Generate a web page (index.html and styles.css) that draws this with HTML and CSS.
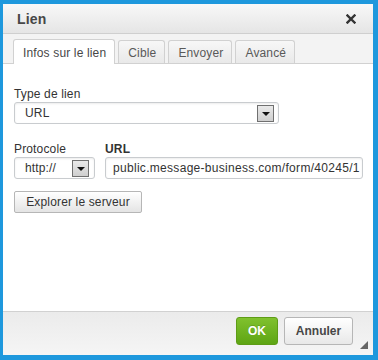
FILE: index.html
```html
<!DOCTYPE html>
<html lang="fr">
<head>
<meta charset="utf-8">
<title>Lien</title>
<link rel="stylesheet" href="styles.css">
</head>
<body>
<div class="frame">
  <div class="dialog">
    <div class="titlebar">
      <span class="title">Lien</span>
      <svg class="close" width="10" height="10" viewBox="0 0 10 10"><path d="M1.5 1.5 L8.5 8.5 M8.5 1.5 L1.5 8.5" stroke="#333" stroke-width="2.4" stroke-linecap="square"/></svg>
    </div>
    <div class="tabs">
      <div class="tab active">Infos sur le lien</div>
      <div class="tab">Cible</div>
      <div class="tab">Envoyer</div>
      <div class="tab">Avancé</div>
    </div>
    <div class="content">
      <div class="field">
        <label class="label">Type de lien</label>
        <div class="select select-type">
          <span class="value">URL</span>
          <span class="arrow"></span>
        </div>
      </div>
      <div class="row">
        <div class="field">
          <label class="label">Protocole</label>
          <div class="select select-proto">
            <span class="value">http://</span>
            <span class="arrow"></span>
          </div>
        </div>
        <div class="field grow">
          <label class="label bold">URL</label>
          <div class="input">public.message-business.com/form/40245/1</div>
        </div>
      </div>
      <div class="btn-row">
        <button class="btn">Explorer le serveur</button>
      </div>
    </div>
    <div class="footer">
      <button class="dbtn ok">OK</button>
      <button class="dbtn cancel">Annuler</button>
      <span class="grip"></span>
    </div>
  </div>
</div>
</body>
</html>
```

FILE: styles.css
```css
html, body {
  margin: 0;
  padding: 0;
}
body {
  background: #1e98dd;
  font-family: "Liberation Sans", Arial, sans-serif;
  font-size: 12px;
  color: #333;
  letter-spacing: 0.15px;
}
.frame {
  width: 378px;
  height: 360px;
  box-sizing: border-box;
  padding: 4px 5px 5px 3px;
}
.dialog {
  width: 370px;
  height: 351px;
  background: #fff;
  display: flex;
  flex-direction: column;
}
.titlebar {
  height: 29px;
  flex: none;
  border-bottom: 1px solid #cfcfcf;
  background: linear-gradient(#f8f8f8, #e5e5e5);
  display: flex;
  align-items: center;
  justify-content: space-between;
  padding: 0 17px 0 14px;
}
.title {
  font-weight: bold;
  font-size: 14px;
  color: #474747;
  margin-top: 1px;
}
.close {
  display: block;
  margin-top: 1px;
}
.tabs {
  height: 29px;
  flex: none;
  background: #f3f3f3;
  border-bottom: 1px solid #d1d1d1;
  display: flex;
  align-items: flex-end;
  gap: 3px;
  padding-left: 10px;
}
.tab {
  height: 23px;
  box-sizing: border-box;
  border: 1px solid #d1d1d1;
  border-bottom: none;
  border-radius: 3px 3px 0 0;
  background: linear-gradient(#f7f7f7, #e9e9e9);
  color: #595959;
  padding: 5px 8px 0 9px;
  line-height: 14px;
}
.tab.active {
  height: 25px;
  margin-bottom: -1px;
  background: #fff;
  padding-top: 6px;
  color: #474747;
}
.content {
  flex: 1;
  padding: 23px 10px 0 11px;
  display: flex;
  flex-direction: column;
}
.field {
  display: flex;
  flex-direction: column;
}
.label {
  line-height: 14px;
  height: 14px;
  margin-bottom: 1px;
  color: #333;
}
.label.bold {
  font-weight: bold;
}
.select, .input {
  height: 22px;
  box-sizing: border-box;
  border: 1px solid #c9cccf;
  border-radius: 3px;
  box-shadow: inset 0 1px 2px rgba(0,0,0,0.08);
  background: #fff;
  display: flex;
  align-items: center;
  color: #333;
}
.select-type {
  width: 265px;
  padding: 0 4px 0 10px;
  justify-content: space-between;
}
.select-proto {
  width: 81px;
  padding: 0 5px 0 10px;
  justify-content: space-between;
}
.arrow {
  width: 17px;
  height: 17px;
  box-sizing: border-box;
  border: 1px solid #707070;
  background: linear-gradient(#e9e9e9, #cfcfcf);
  display: flex;
  align-items: center;
  justify-content: center;
}
.arrow::after {
  content: "";
  border-left: 4px solid transparent;
  border-right: 4px solid transparent;
  border-top: 4px solid #111;
  margin-top: 1px;
}
.row {
  display: flex;
  gap: 10px;
  margin-top: 18px;
}
.grow {
  flex: none;
}
.input {
  width: 258px;
  padding: 0 0 0 7px;
  white-space: nowrap;
  overflow: hidden;
  letter-spacing: 0.3px;
}
.btn-row {
  margin-top: 12px;
  display: flex;
}
.btn {
  font-family: inherit;
  font-size: 12px;
  letter-spacing: 0.15px;
  color: #333;
  height: 22px;
  width: 128px;
  border: 1px solid #b6b6b6;
  border-radius: 2px;
  background: linear-gradient(#fff, #e4e4e4);
  padding: 0;
}
.footer {
  height: 38px;
  flex: none;
  border-top: 1px solid #d1d1d1;
  background: linear-gradient(#ebebeb, #f5f5f5);
  display: flex;
  align-items: flex-start;
  justify-content: flex-end;
  padding: 5px 5px 0 0;
  box-sizing: content-box;
  gap: 6px;
}
.dbtn {
  font-family: inherit;
  font-size: 12px;
  font-weight: bold;
  height: 28px;
  border-radius: 3px;
  padding: 0;
}
.ok {
  width: 42px;
  color: #fff;
  border: 1px solid #5e9c16;
  background: linear-gradient(#80c12e, #5ea514);
  text-shadow: 0 -1px 0 rgba(0,0,0,0.15);
}
.cancel {
  width: 69px;
  color: #474747;
  border: 1px solid #b6b6b6;
  background: linear-gradient(#fff, #e8e8e8);
}
.grip {
  width: 0;
  height: 0;
  border-left: 8px solid transparent;
  border-bottom: 8px solid #666;
  align-self: flex-end;
  margin: 0 0 6px 1px;
}
```
